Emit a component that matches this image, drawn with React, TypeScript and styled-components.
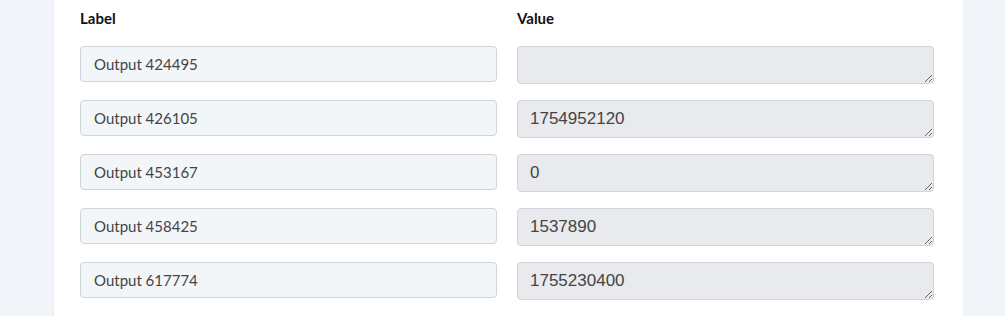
import React from "react";
import styled, { createGlobalStyle } from "styled-components";

const GlobalStyle = createGlobalStyle`
  html, body {
    margin: 0;
    padding: 0;
    background: #f1f4f8;
    font-family: Lato, "Noto Sans", sans-serif;
  }
`;

const rows = [
  { label: "Output 424495", value: "" },
  { label: "Output 426105", value: "1754952120" },
  { label: "Output 453167", value: "0" },
  { label: "Output 458425", value: "1537890" },
  { label: "Output 617774", value: "1755230400" },
];

function App() {
  return (
    <>
      <GlobalStyle />
      <Page>
        <Card>
          <Grid>
            <Header>Label</Header>
            <Header>Value</Header>
            {rows.map((row) => (
              <React.Fragment key={row.label}>
                <LabelInput defaultValue={row.label} />
                <ValueArea readOnly rows={1} defaultValue={row.value} />
              </React.Fragment>
            ))}
          </Grid>
        </Card>
      </Page>
    </>
  );
}

const Page = styled.div`
  padding-left: 54px;
  width: 909px;
  height: 316px;
  overflow: hidden;
`;

const Card = styled.div`
  background: #fff;
  height: 100%;
  padding: 8px 26px 0;
  box-sizing: border-box;
  box-shadow: 0 0 3px rgba(0, 0, 0, 0.08);
`;

const Grid = styled.div`
  display: grid;
  grid-template-columns: 417px 417px;
  column-gap: 20px;
  row-gap: 16px;
  align-items: start;
`;

const Header = styled.div`
  font-weight: 700;
  font-size: 15px;
  line-height: 20px;
  color: #111;
  margin-bottom: 2px;
`;

const LabelInput = styled.input`
  box-sizing: border-box;
  width: 100%;
  height: 36px;
  padding: 0 13px;
  border: 1px solid #ced4da;
  border-radius: 4px;
  background: #f3f6f9;
  font-family: Lato, "Noto Sans", sans-serif;
  font-size: 15px;
  color: #444;
  outline: none;
`;

const ValueArea = styled.textarea`
  box-sizing: border-box;
  display: block;
  width: 100%;
  height: 38px;
  padding: 8px 12px;
  border: 1px solid #ced4da;
  border-radius: 4px;
  background: #e8eaed;
  font-family: "Liberation Sans", Arial, sans-serif;
  font-size: 17px;
  line-height: 20px;
  color: #444;
  outline: none;
  resize: vertical;
  overflow: hidden;
`;

export default App;
